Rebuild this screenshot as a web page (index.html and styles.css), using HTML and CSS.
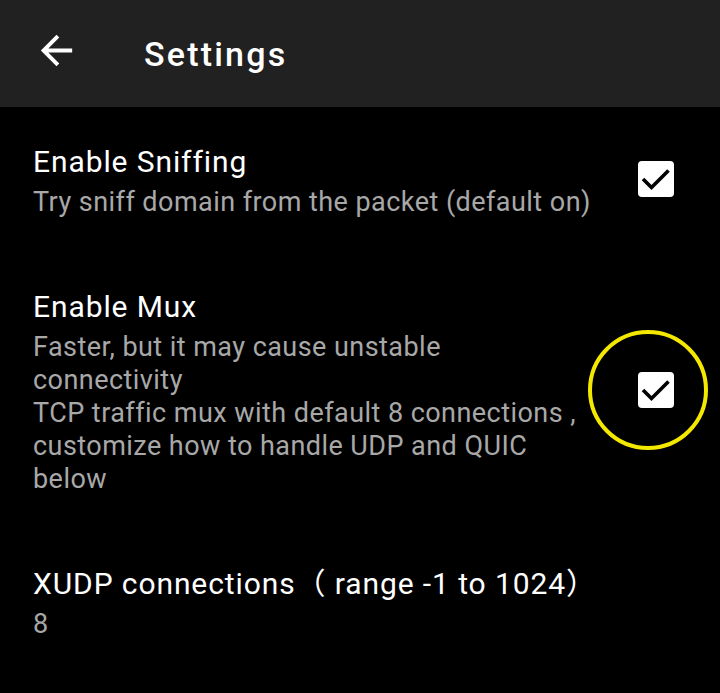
FILE: index.html
```html
<!DOCTYPE html>
<html>
<head>
<meta charset="utf-8">
<link rel="stylesheet" href="styles.css">
</head>
<body>
<header class="appbar">
  <svg class="back" viewBox="0 0 24 24" aria-hidden="true"><path d="M20 11H7.83l5.59-5.59L12 4l-8 8 8 8 1.41-1.41L7.83 13H20v-2z" fill="#fff"/></svg>
  <h1 class="appbar-title">Settings</h1>
</header>
<main class="prefs">
  <div class="pref">
    <div class="pref-text">
      <div class="pref-title">Enable Sniffing</div>
      <div class="pref-summary">Try sniff domain from the packet (default on)</div>
    </div>
    <div class="pref-widget">
      <span class="checkbox">
        <svg viewBox="0 0 36 36"><rect x="0" y="0" width="36" height="36" rx="4" fill="#fff"/><path d="M5 18l8.5 8.5L30.5 9.5" fill="none" stroke="#000" stroke-width="3.6"/></svg>
      </span>
    </div>
  </div>
  <div class="pref">
    <div class="pref-text">
      <div class="pref-title">Enable Mux</div>
      <div class="pref-summary">Faster, but it may cause unstable connectivity<br>TCP traffic mux with default 8 connections , customize how to handle UDP and QUIC below</div>
    </div>
    <div class="pref-widget">
      <span class="checkbox">
        <svg viewBox="0 0 36 36"><rect x="0" y="0" width="36" height="36" rx="4" fill="#fff"/><path d="M5 18l8.5 8.5L30.5 9.5" fill="none" stroke="#000" stroke-width="3.6"/></svg>
        <span class="highlight"></span>
      </span>
    </div>
  </div>
  <div class="pref">
    <div class="pref-text">
      <div class="pref-title">XUDP connections（ range -1 to 1024）</div>
      <div class="pref-summary">8</div>
    </div>
  </div>
</main>
</body>
</html>
```

FILE: styles.css
```css
html, body {
  margin: 0;
  padding: 0;
  background: #000;
}
body {
  font-family: Roboto, "Noto Sans CJK SC", sans-serif;
  width: 720px;
  height: 693px;
  overflow: hidden;
}
.appbar {
  height: 107px;
  background: #212121;
  display: flex;
  align-items: center;
  padding-left: 33px;
  box-sizing: border-box;
}
.back {
  width: 47px;
  height: 47px;
  display: block;
  margin-top: -6px;
}
.appbar-title {
  margin: 0 0 0 64px;
  color: #fff;
  font-size: 34px;
  font-weight: 500;
  line-height: 40px;
  letter-spacing: 2.2px;
}
.prefs {
  display: flex;
  flex-direction: column;
}
.pref {
  display: flex;
  align-items: center;
  padding: 35px 46px 33px 33px;
}
.pref-text {
  width: 560px;
}
.pref-title {
  color: #fff;
  font-size: 30px;
  line-height: 40px;
  margin-bottom: 4px;
  letter-spacing: 0.9px;
  white-space: nowrap;
}
.pref-summary {
  color: #a8a8a8;
  font-size: 27px;
  line-height: 33px;
  letter-spacing: 0.45px;
}
.pref-widget {
  flex: 1;
  display: flex;
  justify-content: flex-end;
}
.checkbox {
  position: relative;
  width: 36px;
  height: 36px;
  display: block;
  margin-top: -3px;
}
.checkbox svg {
  display: block;
  width: 36px;
  height: 36px;
}
.highlight {
  position: absolute;
  left: -50px;
  top: -42px;
  width: 112px;
  height: 112px;
  border: 4px solid #f4e800;
  border-radius: 50%;
}
```
